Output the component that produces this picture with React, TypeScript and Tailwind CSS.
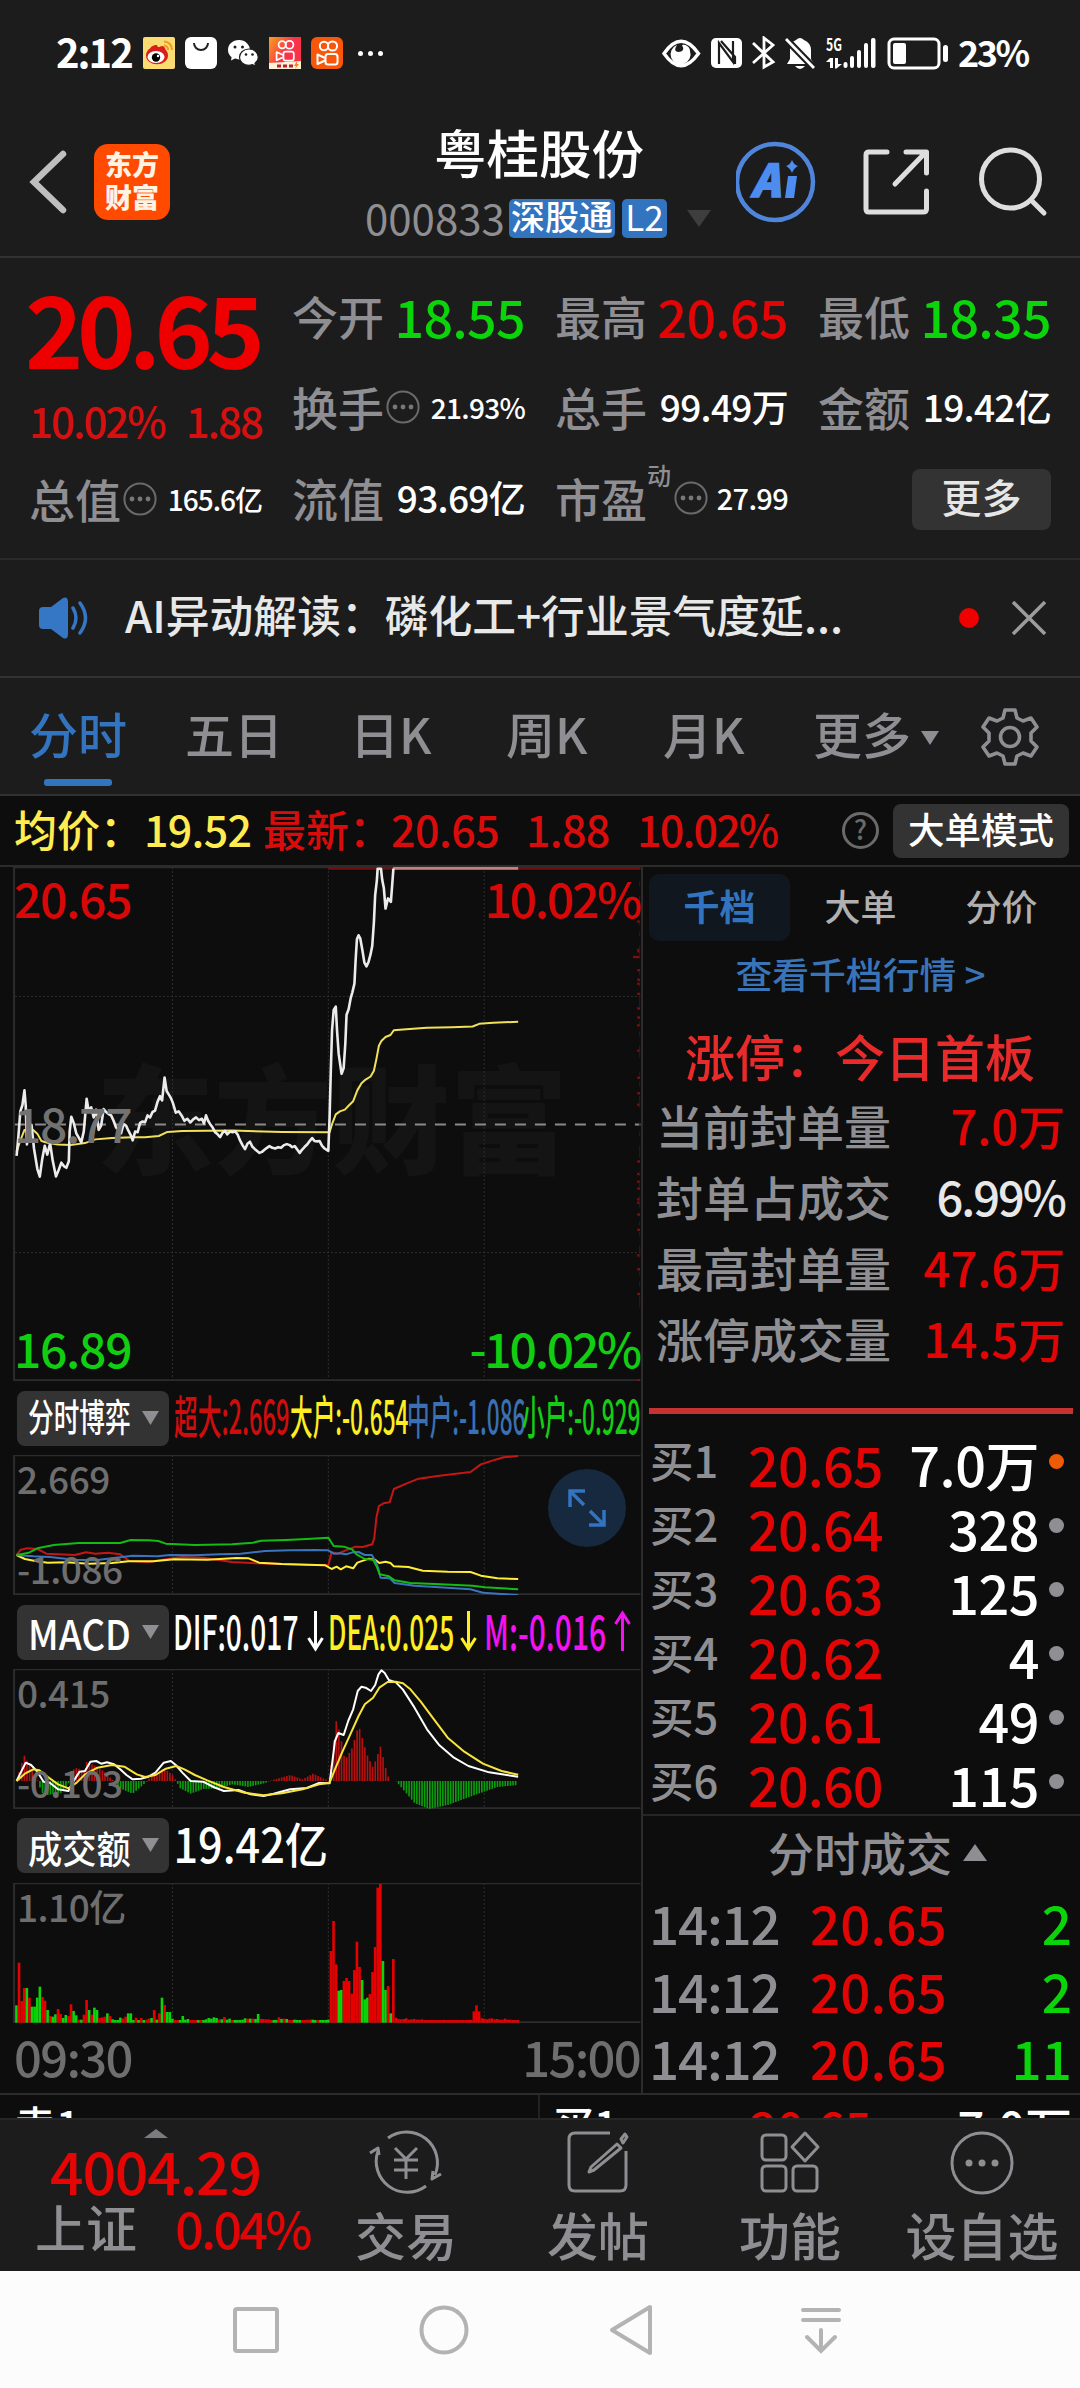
import type { ReactNode } from "react";

type Point = [number, number];

const RED = "#e60000";
const GREEN = "#0bd40b";

const quoteColumns = [
  [
    { label: "今开", value: "18.55", cls: "text-[52px] text-[#0bd40b]" },
    { label: "换手", value: "21.93%", cls: "text-[28px] text-white", more: true },
    { label: "流值", value: "93.69亿", cls: "text-[37px] text-white" },
  ],
  [
    { label: "最高", value: "20.65", cls: "text-[52px] text-[#e10505]" },
    { label: "总手", value: "99.49万", cls: "text-[37px] text-white" },
    { label: "市盈", value: "27.99", cls: "text-[29px] text-white", more: true, sup: "动" },
  ],
  [
    { label: "最低", value: "18.35", cls: "text-[52px] text-[#0bd40b]" },
    { label: "金额", value: "19.42亿", cls: "text-[37px] text-white" },
  ],
];

const sealRows = [
  { label: "当前封单量", value: "7.0万", cls: "text-[#e10505]" },
  { label: "封单占成交", value: "6.99%", cls: "text-[#e8e8e8] tracking-[-2px]" },
  { label: "最高封单量", value: "47.6万", cls: "text-[#e10505]" },
  { label: "涨停成交量", value: "14.5万", cls: "text-[#e10505]" },
];

const bids = [
  { label: "买1", price: "20.65", volume: "7.0万", dot: "bg-[#ee5a06]" },
  { label: "买2", price: "20.64", volume: "328", dot: "bg-[#8e8e93]" },
  { label: "买3", price: "20.63", volume: "125", dot: "bg-[#8e8e93]" },
  { label: "买4", price: "20.62", volume: "4", dot: "bg-[#8e8e93]" },
  { label: "买5", price: "20.61", volume: "49", dot: "bg-[#8e8e93]" },
  { label: "买6", price: "20.60", volume: "115", dot: "bg-[#8e8e93]" },
];

const trades = [
  { time: "14:12", price: "20.65", volume: "2" },
  { time: "14:12", price: "20.65", volume: "2" },
  { time: "14:12", price: "20.65", volume: "11" },
];

const priceLine =
  "40,872 44,820 49,740 54,722 59,678 62,722 65,838 70,790 76,780 82,850 90,910 96,933 102,880 108,842 114,868 121,835 127,885 135,933 142,912 148,892 154,902 160,907 166,888 168,800 172,756 178,775 184,805 190,818 196,832 202,800 206,745 209,703 214,740 220,728 226,758 232,735 238,795 244,782 250,733 256,742 262,748 268,752 274,768 280,788 286,795 292,805 298,778 304,782 310,798 316,812 320,826 326,800 332,802 338,774 344,770 350,772 356,752 362,758 368,742 374,738 380,712 386,695 391,708 397,640 402,680 407,690 412,700 417,715 424,744 431,740 438,752 445,768 452,762 459,773 466,764 473,758 480,766 487,762 492,776 497,752 502,768 507,778 513,788 519,802 525,808 531,816 537,803 543,798 548,808 555,800 561,802 567,799 573,808 579,826 585,840 591,852 597,836 603,830 609,845 615,852 621,858 626,863 632,860 638,854 644,848 650,843 657,848 664,850 671,846 678,848 685,840 692,837 699,840 705,846 711,843 717,853 723,863 729,853 735,845 741,838 747,828 753,819 759,828 765,829 771,828 777,842 783,850 792,857 795,760 798,620 801,500 805,440 810,430 813,500 817,570 824,629 829,612 833,540 836,454 841,438 846,405 850,388 855,362 858,290 861,231 865,219 869,228 874,262 879,300 884,311 889,298 894,275 898,250 902,180 905,100 909,58 911,22 919,22 922,55 926,80 930,140 936,110 943,120 949,22";

const avgLine =
  "40,860 48,830 59,795 68,798 80,795 90,806 100,828 115,833 140,838 170,840 205,834 230,823 270,819 320,817 350,817 383,813 404,801 440,798 560,797 680,801 795,802 801,778 810,749 820,740 832,735 842,722 852,710 862,678 872,657 882,646 894,637 902,620 908,585 914,546 920,532 930,520 942,514 950,500 980,497 1030,493 1090,491 1140,489 1156,481 1190,478 1250,475";

const flowLines = [
  {
    color: "#c51616",
    points:
      "40,522 50,506 66,502 90,504 112,518 140,520 180,522 208,514 230,518 260,515 290,520 312,540 360,543 400,535 440,528 490,530 530,538 560,543 620,547 680,549 740,551 792,553 800,514 815,518 840,505 858,497 875,498 898,490 903,470 908,410 914,375 925,367 940,364 950,324 980,308 1010,293 1060,284 1135,273 1160,250 1195,236 1215,229 1250,225",
  },
  {
    color: "#ffee33",
    points:
      "40,522 60,534 85,540 115,545 160,544 215,548 270,546 310,541 370,541 420,535 500,536 570,531 600,532 625,545 680,549 740,551 785,553 800,564 812,557 822,565 835,556 852,562 862,545 890,533 905,536 915,546 930,542 942,546 950,556 985,558 1020,569 1080,572 1135,573 1160,584 1200,592 1250,594",
  },
  {
    color: "#3a74bd",
    points:
      "40,522 80,526 120,528 180,536 230,538 280,530 320,524 380,526 410,522 470,523 530,520 580,518 640,510 700,508 760,507 792,508 805,518 820,517 835,520 850,514 865,513 880,522 897,522 905,540 912,560 918,590 940,592 952,606 1000,614 1060,619 1135,625 1165,635 1210,639 1250,642",
  },
  {
    color: "#14bb14",
    points:
      "40,522 70,515 90,502 130,492 190,486 290,486 315,477 360,478 382,480 400,488 470,492 560,490 610,485 630,479 690,477 740,474 792,470 805,495 830,497 850,506 860,520 880,534 900,536 908,555 916,580 938,586 952,598 990,606 1050,609 1140,614 1170,619 1250,625",
  },
];

const difLine =
  "40,1200 50,1175 62,1145 75,1152 90,1172 105,1202 120,1205 140,1225 165,1230 180,1195 192,1172 205,1170 218,1142 232,1140 244,1148 258,1144 275,1150 290,1165 305,1182 320,1195 340,1193 358,1187 375,1175 395,1145 412,1140 424,1152 440,1175 460,1200 490,1202 515,1218 540,1230 575,1227 605,1240 636,1245 660,1238 700,1225 740,1221 770,1206 795,1207 801,1150 808,1080 816,1056 829,1062 840,1020 852,985 863,930 872,917 882,920 895,930 905,912 913,880 920,868 928,876 938,897 955,904 972,926 1000,980 1030,1045 1060,1093 1095,1130 1130,1155 1180,1174 1250,1187";

const deaLine =
  "40,1200 60,1178 80,1165 95,1168 110,1183 140,1210 165,1222 185,1205 205,1180 235,1160 270,1152 300,1157 330,1180 350,1188 375,1182 400,1163 425,1155 445,1165 470,1182 500,1198 540,1218 590,1235 636,1243 680,1237 730,1225 770,1210 795,1205 808,1165 825,1115 845,1060 865,1005 880,970 900,950 915,920 935,903 955,902 972,907 990,925 1015,962 1045,1012 1080,1070 1120,1112 1165,1148 1210,1170 1250,1181";

const macdHeights: Point[] = [
  [40, 0], [58, 78], [70, 50], [88, 5], [92, 0], [100, -35], [115, -42], [150, -35], [166, -5],
  [172, 20], [180, 40], [195, 35], [202, 20], [208, 58], [220, 52], [250, 30], [270, 5], [275, 0],
  [285, -20], [320, -38], [345, -12], [355, 0], [365, 15], [395, 38], [415, 20], [425, 0],
  [435, -22], [460, -38], [490, -24], [530, -22], [560, -10], [600, -18], [640, -6], [650, 0],
  [700, 18], [730, 5], [755, 22], [785, 5], [793, 0], [800, 60], [810, 184], [820, 145], [832, 62],
  [850, 100], [865, 168], [885, 80], [900, 40], [918, 104], [930, 40], [940, 0], [955, 0],
  [1000, -66], [1035, -84], [1080, -72], [1150, -40], [1200, -18], [1250, -12],
];

// one entry per minute, r/g is the direction and the number the bar height
const volumes = (
  "g52 r180 r65 r104 g104 r75 g48 g48 g75 g108 r77 r66 g38 r20 g18 g25 r41 r26 g14 g23 " +
  "r20 r55 g35 g22 r9 g9 r24 r68 g38 r24 g45 g38 r14 r16 r18 g28 r20 g10 g8 g8 " +
  "g15 r12 r18 g28 g28 g8 r15 g8 r14 g8 r9 r12 g14 r38 g9 r28 g75 r53 g32 g32 " +
  "g12 r8 r8 g8 g20 g9 g11 r8 r8 r8 g8 r8 g8 g10 g14 g12 g16 g14 r10 g10 " +
  "r17 g9 g12 r8 g8 g8 g8 g9 g13 r12 g12 r12 g11 g26 r11 r11 r10 r10 r8 g8 " +
  "g8 r16 g11 r12 g11 r8 r8 g9 g8 g8 r8 r8 r9 r9 g9 g8 r8 g8 g8 g8 " +
  "g9 r215 r305 r175 g96 g98 r125 r134 r125 r87 r158 r243 r167 g128 g70 g75 r86 r152 r227 r405 " +
  "r416 g185 g98 r110 g28 r191 r15 r11 r10 r11 r13 r9 r10 r11 r9 r9 r10 r8 r8 r8 " +
  "r8 r8 r8 r8 r8 r8 r8 r8 r8 r8 r8 r8 r8 r8 r8 r8 r34 r52 r34 r13 " +
  "r12 r10 r12 r13 r10 r11 r9 r9 r12 r9 r9 r8 r8 r8"
).split(" ");

function heightAt(points: Point[], x: number) {
  for (let i = 1; i < points.length; i++) {
    const [x0, y0] = points[i - 1];
    const [x1, y1] = points[i];
    if (x <= x1) return y0 + ((y1 - y0) * (x - x0)) / (x1 - x0);
  }
  return 0;
}

function Line({ points, color, width = 2 }: { points: string; color: string; width?: number }) {
  return (
    <polyline
      points={points}
      fill="none"
      stroke={color}
      strokeWidth={width}
      strokeLinejoin="round"
      vectorEffect="non-scaling-stroke"
    />
  );
}

// all charts share the same x axis: 36 is 09:30 and 1545 is 15:00
function Chart({ top, height, rows = [], children }: { top: number; height: number; rows?: number[]; children: ReactNode }) {
  return (
    <svg
      className="block h-full w-[650px]"
      viewBox={`0 ${top} 1568 ${height}`}
      preserveAspectRatio="none"
    >
      <g stroke="#2f2f2f" strokeDasharray="2 2" strokeWidth="1">
        {[416, 792, 1168].map((x) => (
          <line key={x} x1={x} x2={x} y1={top} y2={top + height} vectorEffect="non-scaling-stroke" />
        ))}
        {rows.map((y) => (
          <line key={y} x1="36" x2="1545" y1={y} y2={y} vectorEffect="non-scaling-stroke" />
        ))}
      </g>
      <path
        d={`M1545 ${top + 1}H34V${top + height - 2}H1545`}
        fill="none"
        stroke="#2c2c2c"
        strokeWidth="2"
        vectorEffect="non-scaling-stroke"
      />
      {children}
    </svg>
  );
}

function MoreCircle({ size = 34 }: { size?: number }) {
  return (
    <svg width={size} height={size} viewBox="0 0 34 34" className="ml-[2px] shrink-0">
      <circle cx="17" cy="17" r="15.6" fill="none" stroke="#6a6a6c" strokeWidth="2" />
      <circle cx="9" cy="17" r="2.4" fill="#77777a" />
      <circle cx="17" cy="17" r="2.4" fill="#77777a" />
      <circle cx="25" cy="17" r="2.4" fill="#77777a" />
    </svg>
  );
}

function KuaishouMark() {
  return (
    <g fill="none" stroke="#fff" strokeWidth="2">
      <circle cx="13" cy="9" r="4.2" />
      <circle cx="21.5" cy="9" r="4.6" />
      <rect x="14.5" y="17" width="12" height="10.5" rx="2.5" />
      <path d="M14 21L6.5 17.5V27L14 23.5" strokeLinejoin="round" />
    </g>
  );
}

function StatusBar() {
  return (
    <div className="flex h-[106px] items-center justify-between pl-[56px] pr-[51px]">
      <div className="flex items-center">
        <span className="w-[87px] pb-1 text-[40px] font-bold leading-none tracking-[-2px]">2:12</span>
        <div className="flex gap-[10px]">
          <svg width="32" height="32" viewBox="0 0 32 32">
            <rect width="32" height="32" rx="2" fill="#fbdc72" />
            <ellipse cx="14" cy="18.500" rx="11" ry="8.800" fill="#d81e1e" />
            <path d="M5 14Q9 7 14 8L15 11Q20 7 22 11L23 16Z" fill="#d81e1e" />
            <ellipse cx="13" cy="20" rx="8.500" ry="6" fill="#fff" />
            <circle cx="13" cy="20.500" r="4.200" fill="#000" />
            <circle cx="15" cy="19" r="1.200" fill="#fff" />
            <path d="M21 4.500A8 8 0 0 1 29 13M21 8.500A4 4 0 0 1 25 13" fill="none" stroke="#f39a1e" strokeWidth="2" />
          </svg>
          <svg width="32" height="32" viewBox="0 0 32 32">
            <rect width="32" height="32" rx="6" fill="#fff" />
            <path d="M9 6A7 7 0 0 0 23 6" fill="none" stroke="#222" strokeWidth="2" />
          </svg>
          <svg width="32" height="32" viewBox="0 0 32 32">
            <path d="M12 3C5.500 3 1 7.400 1 13c0 3 1.400 5.500 3.600 7.200L4 23.500 8 21.600 12 22.400C18.500 22.400 23 18 23 13S18.500 3 12 3Z" fill="#fff" />
            <path d="M22 12c-5.500 0-9.500 3.800-9.500 8.300 0 4.400 4 8.100 9.500 8.100l3.500-.7 3.200 1.600-.7-3c2-1.400 3.300-3.500 3.300-6C31.300 15.800 27.500 12 22 12Z" fill="#fff" stroke="#1c1c1c" strokeWidth="1.200" />
            <g fill="#1c1c1c">
              <circle cx="8" cy="10" r="1.500" />
              <circle cx="15.500" cy="10" r="1.500" />
              <circle cx="19" cy="17.500" r="1.300" />
              <circle cx="25.500" cy="17.500" r="1.300" />
            </g>
          </svg>
          <svg width="32" height="32" viewBox="0 0 32 32">
            <defs>
              <linearGradient id="lite" x1="0" y1="0" x2="1" y2="0.600">
                <stop offset="0" stopColor="#f9a21b" />
                <stop offset="0.600" stopColor="#f8334a" />
              </linearGradient>
            </defs>
            <rect width="32" height="32" fill="url(#lite)" />
            <g transform="translate(2 0) scale(0.860)">
              <KuaishouMark />
            </g>
            <path d="M0 26L32 24V32H0Z" fill="#fff0d8" />
            <path d="M8 27.500h4v3H8zM14 27.500h4v3h-4zM20 27.500h4v3h-4z" fill="#b5232d" />
            <path d="M28 24l-3 5h2l-1 3 4-5h-2z" fill="#f9821b" />
          </svg>
          <svg width="32" height="32" viewBox="0 0 32 32">
            <rect width="32" height="32" rx="6" fill="#f8560b" />
            <KuaishouMark />
          </svg>
        </div>
        <div className="ml-[15px] flex gap-[5px]">
          <i className="size-[5px] rounded-full bg-white" />
          <i className="size-[5px] rounded-full bg-white" />
          <i className="size-[5px] rounded-full bg-white" />
        </div>
      </div>
      <div className="flex items-center">
        <svg width="296" height="34" viewBox="662 36 296 34">
          <path d="M664 53.500Q681 29 698.500 53.500Q681 78 664 53.500Z" fill="none" stroke="#fff" strokeWidth="3.400" />
          <path d="M677 45A10 10 0 1 0 690 51Q690 47 685.500 45Q683 44.500 682 45Q686 52 678 52Q673 51 677 45Z" fill="#fff" />
          <rect x="711" y="38" width="31" height="30" rx="5" fill="#fff" />
          <path d="M719 64V43L733 62V41M721 41L735 57V64" fill="none" stroke="#1c1c1c" strokeWidth="2.200" />
          <path d="M753 43L773 62L764 67V38L773 45L753 63" fill="none" stroke="#fff" strokeWidth="2.800" />
          <path d="M787 64L790 59V50Q790 42 796 40Q800 36 804 40Q811 43 811 50V59L814 64Z" fill="#fff" />
          <path d="M795 66H805Q800 72 795 66Z" fill="#fff" />
          <path d="M785 38L815 69" stroke="#1c1c1c" strokeWidth="7" />
          <path d="M786 39L814 68" stroke="#fff" strokeWidth="2.800" />
          <g fill="#fff">
            <rect x="843.500" y="62" width="4" height="6" rx="2" />
            <rect x="850" y="56" width="4" height="12" rx="2" />
            <rect x="857" y="50" width="4" height="18" rx="2" />
            <rect x="864" y="43" width="4" height="25" rx="2" />
            <rect x="871" y="38" width="4.500" height="30" rx="2" />
            <path d="M826 62L830 58H833V68H830V62ZM835 58H838V64H842L836.500 68.500H835Z" />
          </g>
          <text x="826" y="51" fill="#fff" fontSize="17" fontWeight="700" textLength="16" lengthAdjust="spacingAndGlyphs">5G</text>
          <rect x="889" y="39" width="50" height="29" rx="5" fill="none" stroke="#fff" strokeWidth="3" />
          <rect x="893" y="43" width="13" height="21" rx="2" fill="#fff" />
          <rect x="943" y="45" width="5" height="17" rx="2.500" fill="#fff" />
        </svg>
        <span className="w-[71px] whitespace-nowrap pb-1 text-[36px] font-bold leading-none tracking-[-2.500px]">23%</span>
      </div>
    </div>
  );
}

function Header() {
  return (
    <div className="flex h-[152px] border-b-2 border-[#323232]">
      <svg width="94" height="152" viewBox="0 106 94 152">
        <path d="M63 154L34 182L63 210" fill="none" stroke="#bfbfbf" strokeWidth="6.500" strokeLinecap="round" />
      </svg>
      <div className="mt-[38px] flex h-[76px] w-[76px] flex-col items-center justify-center rounded-[14px] bg-[#ff4a00] pb-1 text-[27px] font-black leading-[33px] text-[#fff3e4]">
        <span>东方</span>
        <span>财富</span>
      </div>
      <div className="ml-[195px] flex w-[371px] flex-col">
        <span className="mt-[19px] pl-[69px] text-[52.500px] font-medium leading-none">粤桂股份</span>
        <div className="mt-[19px] flex h-[44px] items-center whitespace-nowrap">
          <span className="w-[144px] pb-[3px] text-[42px] font-normal leading-none text-[#8e8e93]">000833</span>
          <span className="flex h-[39px] w-[106px] justify-center rounded-[5px] bg-[#3274bf] text-[34px] leading-[34px]">深股通</span>
          <span className="ml-[7px] flex h-[39px] w-[45px] justify-center rounded-[5px] bg-[#3274bf] text-[35px] font-normal leading-[33px]">L2</span>
          <svg className="ml-[20px]" width="24" height="17">
            <path d="M0 0H24L12 17Z" fill="#3e3e3e" />
          </svg>
        </div>
      </div>
      <svg width="344" height="150" viewBox="736 106 344 150" fill="none">
        <circle cx="775" cy="182" r="38" stroke="#4f86dc" strokeWidth="4.500" />
        <text x="751" y="197" fill="#4d8df0" stroke="#4d8df0" strokeWidth="1.500" fontSize="45" fontWeight="900" fontStyle="italic" textLength="29" lengthAdjust="spacingAndGlyphs">A</text>
        <path d="M788 176H797L794 198H785Z" fill="#4d8df0" />
        <path d="M792 160Q794 165 798 166Q794 168 792 173Q790 168 786 166Q790 165 792 160Z" fill="#4d8df0" />
        <g stroke="#dedede" strokeWidth="5" strokeLinecap="round" strokeLinejoin="round">
          <path d="M887 152H869Q866 152 866 155V209Q866 212 869 212H923Q926.500 212 926.500 209V191" />
          <path d="M906 152H926.500V173M925 153L895 184" />
          <circle cx="1010.500" cy="179" r="29" />
          <path d="M1031 200L1044 213" />
        </g>
      </svg>
    </div>
  );
}

function Quotes() {
  return (
    <div className="flex h-[302px] gap-[30px] border-b-2 border-[#2a2a2a] pl-[29px] pt-[12px]">
      <div className="flex w-[233px] flex-col whitespace-nowrap leading-none">
        <span className="-ml-1 pt-[7px] text-[99px] font-bold tracking-[-6.500px] text-[#ee0000]">20.65</span>
        <div className="mt-[23px] flex justify-between text-[42px] tracking-[-2px] text-[#d51010]">
          <span>10.02%</span>
          <span>1.88</span>
        </div>
        <div className="mt-[12px] flex h-[91px] items-center">
          <span className="pb-[2px] text-[46px] text-[#8e8e93]">总值</span>
          <MoreCircle />
          <span className="ml-auto text-[28px] tracking-[-1px]">165.6亿</span>
        </div>
      </div>
      {quoteColumns.map((column, i) => (
        <div key={i} className="w-[233px] whitespace-nowrap leading-none">
          {column.map((item) => (
            <div key={item.label} className="flex h-[91px] items-center">
              <span className="pb-[2px] text-[46px] text-[#8e8e93]">{item.label}</span>
              {item.sup && <span className="mb-[46px] w-[25px] text-[24px] text-[#8e8e93]">{item.sup}</span>}
              {item.more && <MoreCircle />}
              <span className={`ml-auto tracking-[-0.700px] ${item.cls}`}>{item.value}</span>
            </div>
          ))}
          {i === 2 && (
            <div className="ml-[94px] mt-[17px] flex h-[61px] w-[139px] justify-center rounded-lg bg-[#333333] text-[40px] leading-[54px] text-[#e6e6e6]">
              更多
            </div>
          )}
        </div>
      ))}
    </div>
  );
}

function NewsRow() {
  return (
    <div className="flex h-[118px] items-center border-b-2 border-[#323232] pl-[38px]">
      <svg width="52" height="42" viewBox="0 0 52 42">
        <path d="M1 14Q1 10 5 10H13L25 1Q30 -1 30 5V37Q30 43 25 41L13 32H5Q1 32 1 28Z" fill="#3577c4" />
        <path d="M35 11Q41 21 35 31M42 6Q53 21 42 36" fill="none" stroke="#3577c4" strokeWidth="3.500" strokeLinecap="round" />
      </svg>
      <span className="ml-[35px] w-[834px] whitespace-nowrap pb-[6px] text-[43.800px] leading-none text-[#e8e8e8]">
        AI异动解读：磷化工+行业景气度延...
      </span>
      <i className="size-5 rounded-full bg-[#f00000]" />
      <svg className="ml-[33px]" width="34" height="34">
        <path d="M1 1L33 33M33 1L1 33" stroke="#9c9c9c" strokeWidth="3.500" />
      </svg>
    </div>
  );
}

function PeriodTabs() {
  return (
    <div className="flex h-[118px] border-b-2 border-[#323232] text-[49px] leading-none text-[#8e8e93]">
      <div className="flex w-[157px] flex-col pl-[29px] pt-[30px] text-[#3274bf]">
        <span>分时</span>
        <i className="ml-[15px] mt-[22px] h-[7px] w-[68px] rounded-[3px] bg-[#3274bf]" />
      </div>
      <span className="w-[169px] pl-[28px] pt-[30px]">五日</span>
      <span className="w-[154px] pl-[24px] pt-[30px]">日K</span>
      <span className="w-[156px] pl-[26px] pt-[30px]">周K</span>
      <span className="w-[177px] pl-[27px] pt-[30px]">月K</span>
      <span className="pt-[30px]">更多</span>
      <svg className="ml-[10px] mt-[53px]" width="18" height="14">
        <path d="M0 0H18L9 14Z" fill="#8e8e93" />
      </svg>
      <svg className="ml-[41px] mt-[29px]" width="60" height="60" viewBox="-30 -30 60 60" fill="none" stroke="#8e8e93" strokeWidth="3.600" strokeLinejoin="round">
        <path d="M-5 -27H5L7 -19L13 -16L21 -19L27 -10L21 -4V4L27 10L21 19L13 16L7 19L5 27H-5L-7 19L-13 16L-21 19L-27 10L-21 4V-4L-27 -10L-21 -19L-13 -16L-7 -19Z" />
        <circle r="9.500" />
      </svg>
    </div>
  );
}

function PriceSummary() {
  return (
    <div className="flex h-[71px] items-center whitespace-nowrap border-b-2 border-[#2c2c2c] bg-[#0d0d0d] text-[43px] leading-none text-[#d90c0c]">
      <span className="w-[130px] pb-[5px] pl-[14px] text-[#ffec50]">均价：</span>
      <span className="w-[133px] pb-[5px] pl-[14px] tracking-[-0.700px] text-[#ffec50]">19.52</span>
      <span className="w-[128px] pb-[5px]">最新：</span>
      <span className="w-[135px] pb-[5px] tracking-[-0.500px]">20.65</span>
      <span className="w-[111px] pb-[5px] tracking-[-0.700px]">1.88</span>
      <span className="w-[205px] pb-[5px] tracking-[-1.800px]">10.02%</span>
      <div className="flex size-[37px] justify-center rounded-full border-[3px] border-[#6a6a6a] text-[27px] leading-[27px] text-[#6a6a6a]">?</div>
      <span className="ml-[14px] flex h-[54px] w-[176px] justify-center rounded-lg bg-[#333333] text-[36.500px] leading-[49px] text-white">
        大单模式
      </span>
    </div>
  );
}

function PriceChart() {
  const ticks = [178, 262, 266, 283, 322, 350, 362, 392, 435, 462, 485, 560, 640, 686, 720, 888, 925, 948, 968, 1000, 1010, 1045, 1090, 1166, 1207, 1280, 1535];
  return (
    <div className="relative h-[514px] text-[48px] leading-none tracking-[-1.300px]">
      <div className="absolute left-[96px] top-[188px] whitespace-nowrap text-[118px] font-black tracking-normal text-[#141414]">东方财富</div>
      <div className="absolute inset-0">
        <Chart top={17} height={1521} rows={[400, 1158]}>
          <line x1="36" x2="1545" y1="779" y2="779" stroke="#8a8a8a" strokeWidth="2" strokeDasharray="11 9" vectorEffect="non-scaling-stroke" />
          <path d="M791 21H1545" stroke="#6e1010" strokeWidth="3" vectorEffect="non-scaling-stroke" />
          <path d="M948 21H1250" stroke="#c87e7e" strokeWidth="3" vectorEffect="non-scaling-stroke" />
          {ticks.map((y) => (
            <rect key={y} x={y === 283 ? 1527 : 1537} y={y - 3} width={y === 283 ? 17 : 7} height="7" fill="#7a1010" />
          ))}
          <line x1="1543" x2="1543" y1="60" y2="1330" stroke="#4d0c0c" strokeWidth="1" strokeDasharray="5 9 12 14 4 6" vectorEffect="non-scaling-stroke" />
          <Line points={avgLine} color="#f1e05a" />
          <Line points={priceLine} color="#ececec" width={2.6} />
        </Chart>
      </div>
      <span className="absolute left-[14px] top-[6px] text-[#d90808]">20.65</span>
      <span className="absolute right-[1px] top-[6px] tracking-[-2.200px] text-[#d90808]">10.02%</span>
      <span className="absolute left-[14px] top-[231px] text-[#727272]">18.77</span>
      <span className="absolute left-[14px] top-[456px] text-[#12ce12]">16.89</span>
      <span className="absolute right-[1px] top-[456px] tracking-[-2.200px] text-[#12ce12]">-10.02%</span>
    </div>
  );
}

function PanelButton({ children }: { children: ReactNode }) {
  return (
    <div className="flex h-[55px] w-[152px] shrink-0 items-center rounded-lg bg-[#333333] pl-[11px]">
      <div className="w-[104px] whitespace-nowrap pb-[6px] leading-none">{children}</div>
      <svg className="ml-[10px]" width="17" height="14">
        <path d="M0 0H17L8.500 14Z" fill="#8e8e93" />
      </svg>
    </div>
  );
}

function Arrow({ up, color }: { up?: boolean; color: string }) {
  return (
    <svg width="17" height="42" viewBox="0 0 17 42" className={up ? "rotate-180" : ""}>
      <path d="M8.500 1V39M1.500 28L8.500 39L15.500 28" fill="none" stroke={color} strokeWidth="3" />
    </svg>
  );
}

function FlowPanel() {
  return (
    <>
      <div className="flex h-[74px] items-center pl-[17px] text-[46px] leading-none">
        <PanelButton>
          <span className="block w-[152px] origin-left scale-x-[0.675] text-[38px]">分时博弈</span>
        </PanelButton>
        <div className="flex whitespace-nowrap pb-[8px] pl-[5px]">
          <span className="w-[116px] text-[#cf0d0d]">
            <span className="inline-block origin-left scale-x-[0.515]">超大:2.669</span>
          </span>
          <span className="w-[117px] text-[#ffee22]">
            <span className="inline-block origin-left scale-x-[0.492]">大户:-0.654</span>
          </span>
          <span className="w-[115px] text-[#3a70b4]">
            <span className="inline-block origin-left scale-x-[0.492]">中户:-1.086</span>
          </span>
          <span className="w-[117px] text-[#14ce14]">
            <span className="inline-block origin-left scale-x-[0.492]">小户:-0.929</span>
          </span>
        </div>
      </div>
      <div className="relative h-[140px] text-[37px] leading-none tracking-[-0.500px] text-[#6e6e6e]">
        <Chart top={222} height={420}>
          {flowLines.map((line) => (
            <Line key={line.color} {...line} />
          ))}
        </Chart>
        <span className="absolute left-[17px] top-[5px]">2.669</span>
        <span className="absolute left-[17px] top-[95px]">-1.086</span>
        <div className="absolute left-[548px] top-[14px] flex size-[78px] items-center justify-center rounded-full bg-[#16293f]">
          <svg width="38" height="38" fill="none" stroke="#3274bf" strokeWidth="3.500">
            <path d="M2 18V2H17M3 3L16 16M36 21V36H21M35 35L22 22" />
          </svg>
        </div>
      </div>
    </>
  );
}

function MacdPanel() {
  const xs = Array.from({ length: 194 }, (_, i) => 40 + i * 6.27);
  return (
    <>
      <div className="flex h-[74px] items-center pl-[17px] text-[47px] leading-none">
        <PanelButton>
          <span className="inline-block origin-left scale-x-[0.900] text-[41px]">MACD</span>
        </PanelButton>
        <div className="flex items-center whitespace-nowrap pb-[2px] pl-[4px]">
          <span className="w-[134px] pb-[4px]">
            <span className="inline-block origin-left scale-x-[0.600]">DIF:0.017</span>
          </span>
          <Arrow color="#ffffff" />
          <span className="ml-[4px] w-[132px] pb-[4px] text-[#ffee22]">
            <span className="inline-block origin-left scale-x-[0.560]">DEA:0.025</span>
          </span>
          <Arrow color="#ffee22" />
          <span className="ml-[7px] w-[130px] pb-[4px] text-[#f212f2]">
            <span className="inline-block origin-left scale-x-[0.640]">M:-0.016</span>
          </span>
          <Arrow up color="#f212f2" />
        </div>
      </div>
      <div className="relative h-[140px] text-[37px] leading-none tracking-[-0.500px] text-[#6e6e6e]">
        <Chart top={864} height={420}>
          {xs.map((x) => {
            const h = heightAt(macdHeights, x);
            return (
              <rect key={x} x={x - 2} y={h > 0 ? 1200 - h : 1200} width="4" height={Math.abs(h)} fill={h > 0 ? "#b80f0f" : "#0c9d0c"} />
            );
          })}
          <Line points={difLine} color="#ffffff" />
          <Line points={deaLine} color="#f7e53b" />
        </Chart>
        <span className="absolute left-[17px] top-[5px]">0.415</span>
        <span className="absolute left-[17px] top-[95px]">-0.103</span>
      </div>
    </>
  );
}

function VolumePanel() {
  return (
    <>
      <div className="flex h-[74px] items-center pb-[2px] pl-[17px] text-[48px] leading-none">
        <PanelButton>
          <span className="inline-block origin-left scale-x-[0.900] text-[38px]">成交额</span>
        </PanelButton>
        <span className="inline-block origin-left scale-x-[0.900] whitespace-nowrap pb-[7px] pl-[5px]">19.42亿</span>
      </div>
      <div className="relative h-[140px] text-[37px] leading-none tracking-[-0.500px] text-[#6e6e6e]">
        <Chart top={217} height={420}>
          {volumes.map((v, i) => {
            const h = Number(v.slice(1));
            return (
              <rect key={i} x={36.5 + i * 6.27} y={636 - h} width="6.3" height={h} fill={v[0] === "r" ? RED : GREEN} />
            );
          })}
        </Chart>
        <span className="absolute left-[17px] top-[5px]">1.10亿</span>
      </div>
      <div className="flex justify-between pl-[14px] pr-[1px] pt-[8px] text-[49px] leading-none tracking-[-1.700px] text-[#6e6e6e]">
        <span>09:30</span>
        <span>15:00</span>
      </div>
    </>
  );
}

function OrderBook() {
  return (
    <div className="flex w-[439px] flex-col border-l-2 border-[#2c2c2c] pl-[6px] leading-none">
      <div className="mt-[7px] flex h-[67px] w-[423px] text-center text-[36px] leading-[62px] text-[#b0b0b0]">
        <span className="w-[141px] rounded-[10px] bg-[#10171e] font-bold text-[#3274bf]">千档</span>
        <span className="w-[141px]">大单</span>
        <span className="w-[141px]">分价</span>
      </div>
      <span className="mt-[14px] w-[423px] text-center text-[36.800px] text-[#3a74b8]">查看千档行情 &gt;</span>
      <span className="mt-[38px] whitespace-nowrap pl-[36px] text-[50px] text-[#e82a2a]">涨停：今日首板</span>
      <div className="mt-[9px] pl-[7px] pr-[15px]">
        {sealRows.map((row) => (
          <div key={row.label} className="flex h-[71px] items-center justify-between whitespace-nowrap">
            <span className="text-[47px] text-[#8e8e93]">{row.label}</span>
            <span className={`text-[47px] ${row.cls}`}>{row.value}</span>
          </div>
        ))}
      </div>
      <div className="mt-[35px] h-[6px] w-[424px] shrink-0 bg-[#c43232]" />
      <div className="-ml-[6px] flex h-[402px] shrink-0 flex-col border-b-2 border-[#262626] pl-[7px] pt-[17px]">
        {bids.map((bid) => (
          <div key={bid.label} className="flex h-[64px] shrink-0 items-center whitespace-nowrap">
            <span className="w-[98px] pb-[6px] text-[43.500px] text-[#8e8e93]">{bid.label}</span>
            <span className="pt-[3px] text-[54px] tracking-[-0.900px] text-[#e10505]">{bid.price}</span>
            <span className="ml-auto pt-[3px] text-[54px] tracking-[-0.500px] text-white">{bid.volume}</span>
            <i className={`mb-[3px] ml-[10px] mr-[16px] size-[15px] rounded-full ${bid.dot}`} />
          </div>
        ))}
      </div>
      <div className="flex h-[74px] items-center pl-[119px] text-[46px] text-[#8e8e93]">
        <span className="pb-[4px]">分时成交</span>
        <svg className="ml-[11px]" width="24" height="17">
          <path d="M12 0L24 17H0Z" fill="#8e8e93" />
        </svg>
      </div>
      {trades.map((trade, i) => (
        <div key={i} className="flex h-[67.500px] items-center whitespace-nowrap pb-[2px] pr-[8px] text-[53px] text-[#8e8e93]">
          <span className="w-[161px] tracking-[-1.200px]">14:12</span>
          <span className="text-[#e10505]">{trade.price}</span>
          <span className="ml-auto text-[#0bd40b]">{trade.volume}</span>
        </div>
      ))}
    </div>
  );
}

function DepthStrip() {
  return (
    <div className="flex h-[25px] overflow-hidden whitespace-nowrap border-t-2 border-[#2c2c2c] text-[42px] leading-none">
      <span className="w-[540px] border-r-2 border-[#222222] pl-[14px] pt-[8px]">卖1</span>
      <span className="w-[210px] pl-[12px] pt-[8px]">买1</span>
      <span className="pt-[8px] text-[47px] text-[#e10505]">20.65</span>
      <span className="ml-auto pr-[8px] pt-[8px] text-[47px]">7.0万</span>
    </div>
  );
}

function NavItem({ label, children }: { label: string; children: ReactNode }) {
  return (
    <div className="flex w-[192px] flex-col items-center text-[51px] leading-none text-[#8e8e93]">
      <svg className="mt-[7px]" width="76" height="72" viewBox="-38 -36 76 72" fill="none" stroke="#8e8e93" strokeWidth="3" strokeLinejoin="round">
        {children}
      </svg>
      <span className="mt-[10px] whitespace-nowrap">{label}</span>
    </div>
  );
}

function BottomNav() {
  return (
    <div className="flex h-[153px] border-t-2 border-[#262626]">
      <div className="w-[310px] whitespace-nowrap leading-none">
        <svg className="ml-[144px] mt-[9px]" width="24" height="9">
          <path d="M12 0L24 9H0Z" fill="#7c7c80" />
        </svg>
        <div className="mt-[2px] pl-[50px] text-[59px] tracking-[-1.200px] text-[#e60505]">4004.29</div>
        <div className="flex items-center justify-between pl-[35px] pt-[2px] text-[51px]">
          <span className="text-[#8e8e93]">上证</span>
          <span className="text-[50px] tracking-[-2.500px] text-[#e10505]">0.04%</span>
        </div>
      </div>
      <NavItem label="交易">
        <path d="M-18 -25A31 31 0 0 1 29 12M20 23A31 31 0 0 1 -28 -12" />
        <path d="M-36 -10L-28 -15L-27 -8M35 11L26 16L27 8M-11 -15L0 -4L11 -15M-12 -3H12M-12 7H12M0 -4V16" />
      </NavItem>
      <NavItem label="发帖">
        <path d="M12 -30H-23Q-29 -30 -29 -24V22Q-29 28 -23 28H22Q28 28 28 22V-12" />
        <path d="M19 -19L23 -15L-4 7L-9 9L-7 4Z" />
        <path d="M23 -24L27 -29L29 -26L25 -20Z" />
      </NavItem>
      <NavItem label="功能">
        <rect x="-28" y="-28" width="24" height="25" rx="4" />
        <rect x="-28" y="3" width="24" height="25" rx="4" />
        <rect x="3" y="3" width="24" height="25" rx="4" />
        <path d="M15 -30L28 -16L15 -2L2 -16Z" />
      </NavItem>
      <NavItem label="设自选">
        <circle r="30" />
        <g fill="#8e8e93" strokeWidth="0">
          <circle cx="-13" r="3.500" />
          <circle r="3.500" />
          <circle cx="13" r="3.500" />
        </g>
      </NavItem>
    </div>
  );
}

function SystemNav() {
  return (
    <div className="flex h-[118px] items-center bg-[#fcfcfc] pl-[231px]">
      <svg width="50" height="50" fill="none" stroke="#b3b3b3" strokeWidth="4">
        <rect x="4" y="4" width="42" height="42" rx="2" />
      </svg>
      <svg className="ml-[138px]" width="50" height="50" fill="none" stroke="#b3b3b3" strokeWidth="4">
        <circle cx="25" cy="25" r="22.500" />
      </svg>
      <svg className="ml-[138px]" width="50" height="52" fill="none" stroke="#b3b3b3" strokeWidth="4" strokeLinejoin="round">
        <path d="M43 3V49L5 26Z" />
      </svg>
      <svg className="ml-[139px]" width="50" height="50" fill="none" stroke="#b3b3b3" strokeWidth="4" strokeLinecap="round">
        <path d="M7 5H43M7 15H43M25 25V45M11 32L25 46L39 32" />
      </svg>
    </div>
  );
}

export default function App() {
  return (
    <div className="h-[2388px] w-[1080px] overflow-hidden bg-[#1c1c1c] font-['Noto_Sans_CJK_SC','Noto_Sans',sans-serif] font-medium text-white">
      <StatusBar />
      <Header />
      <Quotes />
      <NewsRow />
      <PeriodTabs />
      <PriceSummary />
      <div className="bg-[#0d0d0d]">
        <div className="flex h-[1226px]">
          <div className="w-[641px]">
            <PriceChart />
            <FlowPanel />
            <MacdPanel />
            <VolumePanel />
          </div>
          <OrderBook />
        </div>
        <DepthStrip />
      </div>
      <BottomNav />
      <SystemNav />
    </div>
  );
}
